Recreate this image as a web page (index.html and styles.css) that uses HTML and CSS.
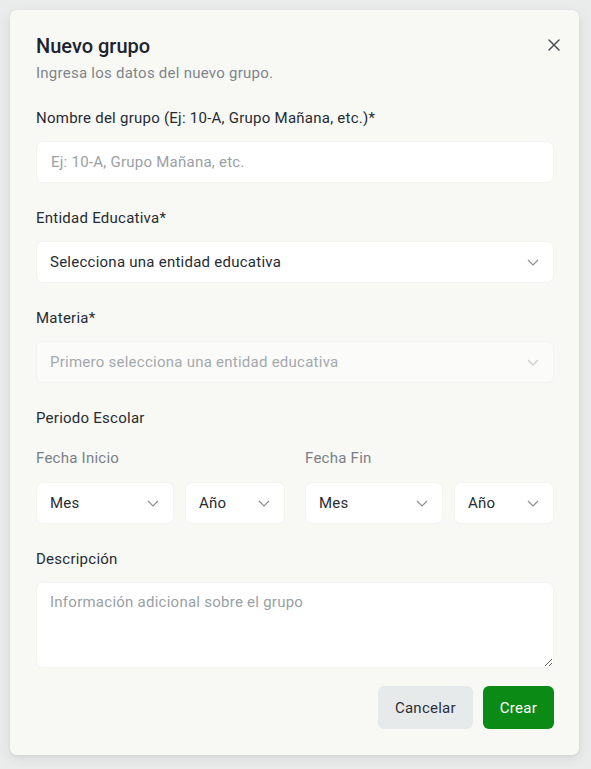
FILE: index.html
```html
<!DOCTYPE html>
<html lang="es">
<head>
  <meta charset="UTF-8">
  <meta name="viewport" content="width=device-width, initial-scale=1">
  <title>Nuevo grupo</title>
  <link rel="stylesheet" href="styles.css">
</head>
<body>

  <div class="dialog">
    <button class="close" type="button" aria-label="Cerrar">
      <svg width="12" height="12" viewBox="0 0 12 12"><path d="M1 1 L11 11 M11 1 L1 11" stroke="#4b4f55" stroke-width="1.5" stroke-linecap="round"/></svg>
    </button>

    <div class="dialog-header">
      <h2>Nuevo grupo</h2>
      <p>Ingresa los datos del nuevo grupo.</p>
    </div>

    <form class="group-form">
      <div class="field">
        <label for="nombre">Nombre del grupo (Ej: 10-A, Grupo Mañana, etc.)*</label>
        <input type="text" id="nombre" placeholder="Ej: 10-A, Grupo Mañana, etc.">
      </div>

      <div class="field">
        <label for="entidad">Entidad Educativa*</label>
        <div class="select-wrap">
          <select id="entidad">
            <option>Selecciona una entidad educativa</option>
          </select>
          <svg class="chevron" width="12" height="7" viewBox="0 0 12 7"><path d="M1 1 L6 6 L11 1" fill="none" stroke="#8a8f96" stroke-width="1.2"/></svg>
        </div>
      </div>

      <div class="field">
        <label for="materia">Materia*</label>
        <div class="select-wrap disabled">
          <select id="materia" disabled>
            <option>Primero selecciona una entidad educativa</option>
          </select>
          <svg class="chevron" width="12" height="7" viewBox="0 0 12 7"><path d="M1 1 L6 6 L11 1" fill="none" stroke="#8a8f96" stroke-width="1.2"/></svg>
        </div>
      </div>

      <div class="field period">
        <span class="label">Periodo Escolar</span>
        <div class="period-grid">
          <div class="period-col">
            <span class="sublabel">Fecha Inicio</span>
            <div class="date-row">
              <div class="select-wrap">
                <select><option>Mes</option></select>
                <svg class="chevron" width="12" height="7" viewBox="0 0 12 7"><path d="M1 1 L6 6 L11 1" fill="none" stroke="#8a8f96" stroke-width="1.2"/></svg>
              </div>
              <div class="select-wrap">
                <select><option>Año</option></select>
                <svg class="chevron" width="12" height="7" viewBox="0 0 12 7"><path d="M1 1 L6 6 L11 1" fill="none" stroke="#8a8f96" stroke-width="1.2"/></svg>
              </div>
            </div>
          </div>
          <div class="period-col">
            <span class="sublabel">Fecha Fin</span>
            <div class="date-row">
              <div class="select-wrap">
                <select><option>Mes</option></select>
                <svg class="chevron" width="12" height="7" viewBox="0 0 12 7"><path d="M1 1 L6 6 L11 1" fill="none" stroke="#8a8f96" stroke-width="1.2"/></svg>
              </div>
              <div class="select-wrap">
                <select><option>Año</option></select>
                <svg class="chevron" width="12" height="7" viewBox="0 0 12 7"><path d="M1 1 L6 6 L11 1" fill="none" stroke="#8a8f96" stroke-width="1.2"/></svg>
              </div>
            </div>
          </div>
        </div>
      </div>

      <div class="field">
        <label for="descripcion">Descripción</label>
        <textarea id="descripcion" placeholder="Información adicional sobre el grupo"></textarea>
      </div>

      <div class="actions">
        <button type="button" class="btn btn-cancel">Cancelar</button>
        <button type="submit" class="btn btn-create">Crear</button>
      </div>
    </form>
  </div>

</body>
</html>
```

FILE: styles.css
```css
* {
  box-sizing: border-box;
}

body {
  font-family: 'Roboto', 'Liberation Sans', sans-serif;
  letter-spacing: 0.25px;
  background-color: #e9eceb;
  margin: 0;
  padding: 10px 12px 12px 10px;
  color: #262b33;
}

.dialog {
  position: relative;
  background: #f8f9f4;
  border-radius: 7px;
  padding: 22px 25px 26px 26px;
  box-shadow: 0 4px 14px rgba(0,0,0,0.08), 0 1px 3px rgba(0,0,0,0.06);
}

.close {
  position: absolute;
  top: 29px;
  right: 19px;
  background: none;
  border: none;
  padding: 0;
  width: 12px;
  height: 12px;
  cursor: pointer;
}

.close svg {
  display: block;
}

.dialog-header h2 {
  margin: 0;
  font-size: 20px;
  line-height: 28px;
  font-weight: 500;
  letter-spacing: 0;
  color: #1e2330;
}

.dialog-header p {
  margin: 3px 0 0 0;
  font-size: 15px;
  line-height: 20px;
  color: #80858c;
}

.group-form {
  display: flex;
  flex-direction: column;
  gap: 25px;
  margin-top: 25px;
}

.field {
  display: flex;
  flex-direction: column;
}

.field label,
.field .label {
  font-size: 15px;
  line-height: 20px;
  color: #262b33;
  margin-bottom: 13px;
}

input,
select,
textarea,
button {
  font-family: inherit;
  letter-spacing: 0.25px;
}

input,
select,
textarea {
  width: 100%;
  font-size: 15px;
  color: #262b33;
  background: #fff;
  border: 1px solid #f3f4f1;
  border-radius: 7px;
  outline: none;
}

input {
  height: 42px;
  padding: 0 14px;
}

input::placeholder,
textarea::placeholder {
  color: #9a9fa5;
}

.select-wrap {
  position: relative;
}

select {
  appearance: none;
  -webkit-appearance: none;
  height: 42px;
  padding: 0 30px 0 13px;
}

.chevron {
  position: absolute;
  right: 15px;
  top: 18px;
  pointer-events: none;
}

.select-wrap.disabled select {
  background: #fbfcfa;
  color: #a4a8ad;
  opacity: 1;
}

.select-wrap.disabled .chevron {
  opacity: 0.45;
}

.period .label {
  margin-bottom: 20px;
}

.period-grid {
  display: grid;
  grid-template-columns: 1fr 1fr;
  gap: 20px;
}

.sublabel {
  display: block;
  font-size: 15px;
  line-height: 20px;
  color: #7a8088;
  margin-bottom: 14px;
}

.date-row {
  display: grid;
  grid-template-columns: 1fr 100px;
  gap: 11px;
}

textarea {
  height: 86px;
  padding: 10px 13px;
  resize: vertical;
  display: block;
}

.actions {
  display: flex;
  justify-content: flex-end;
  gap: 10px;
  margin-top: -7px;
}

.btn {
  height: 43px;
  padding: 0 17px;
  font-size: 15px;
  border: none;
  border-radius: 6px;
  cursor: pointer;
}

.btn-cancel {
  background-color: #e7eaeb;
  color: #2b3038;
}

.btn-create {
  background-color: #0c8a16;
  color: #fff;
}

.btn-create:hover {
  background-color: #0a7a13;
}
```
